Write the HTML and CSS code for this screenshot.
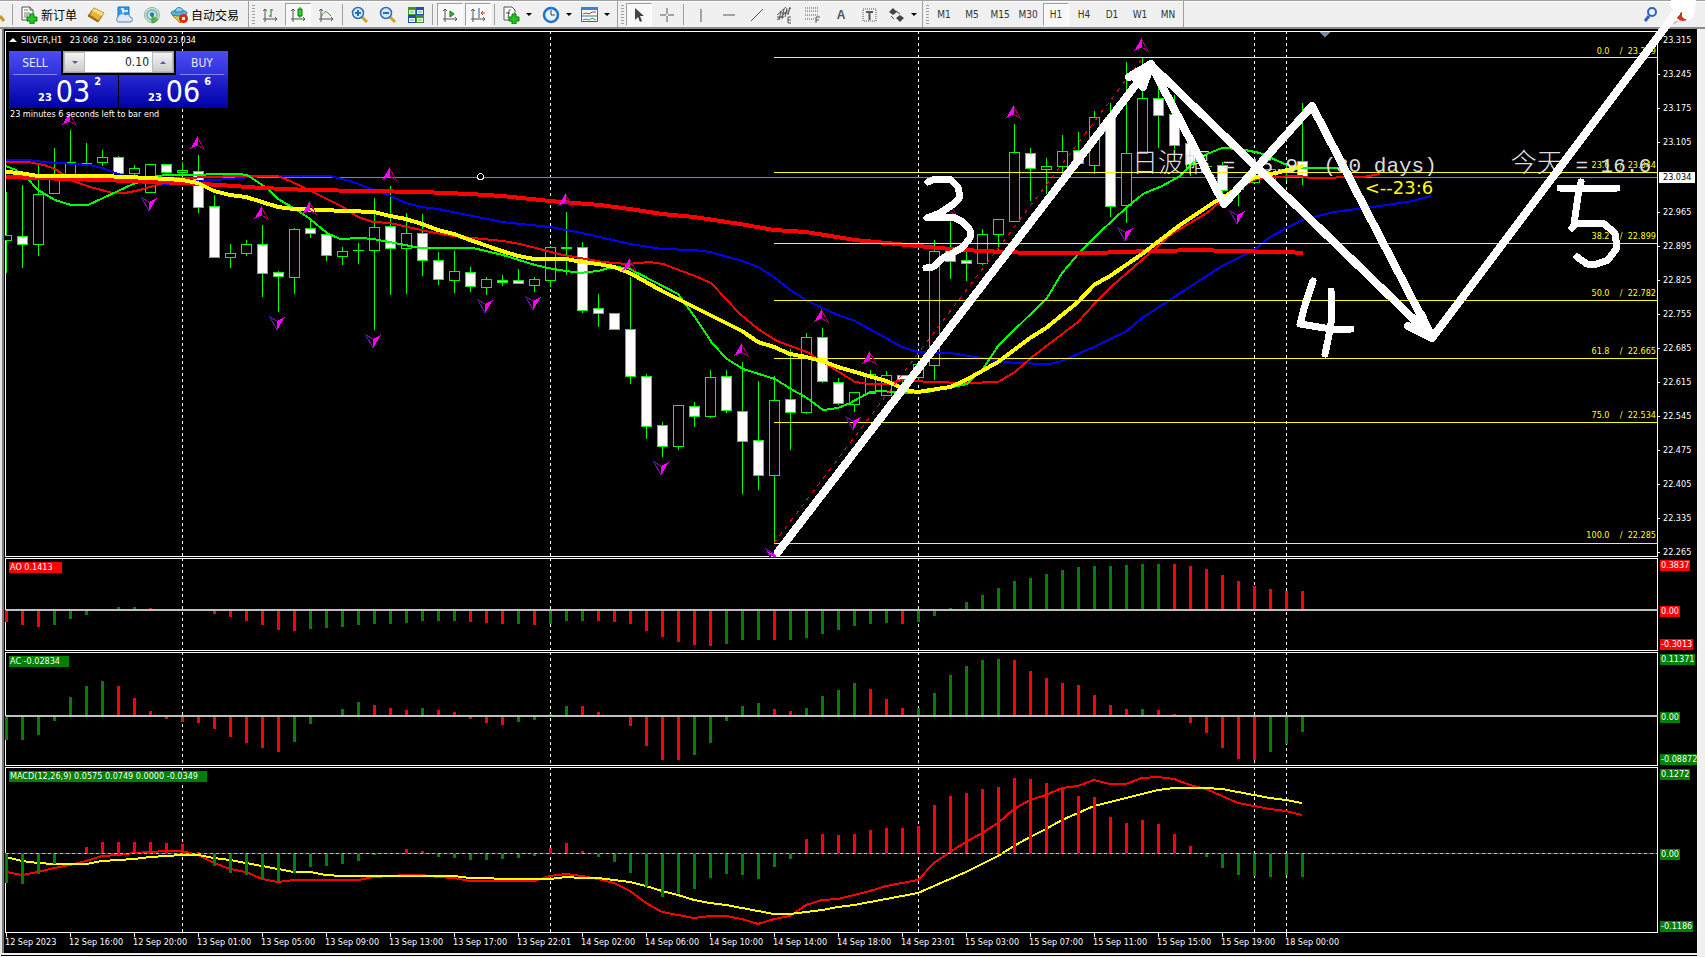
FILE: index.html
```html
<!DOCTYPE html>
<html lang="zh-CN">
<head>
<meta charset="utf-8">
<title>SILVER,H1</title>
<link rel="stylesheet" href="styles.css">
</head>
<body>
<header class="toolbar">
  <div class="group group-trade">
    <button class="tool tool-lens" aria-label="Data window"><svg width="5" height="18" viewBox="0 0 5 18"><path d="M0 10l4 5" stroke="#c8962c" stroke-width="3"/></svg></button>
    <span class="sep"></span>
    <button class="tool tool-text"><svg width="17" height="18" viewBox="0 0 17 18"><path d="M1 1h8l3 3v10H1z" fill="#fff" stroke="#555"/><path d="M9 1v3h3" fill="#ccc" stroke="#555"/><path d="M3 4h4M3 7h6M3 9h6M3 11h4" stroke="#777"/><path d="M9 8h4v3h3v4h-3v3H9v-3H6v-4h3z" fill="#1fc81f" stroke="#0a7a0a"/></svg><span>新订单</span></button>
    <button class="tool" aria-label="Market watch"><svg width="18" height="18" viewBox="0 0 18 18"><path d="M1 10L7 2l10 5-6 9z" fill="#e8b33c" stroke="#8a5a10"/><path d="M7 2l10 5-2 3-10-5z" fill="#f8dc7a"/><path d="M1 10l10 6v-2L2 8z" fill="#a06a16"/></svg></button>
    <button class="tool" aria-label="Cloud"><svg width="18" height="18" viewBox="0 0 18 18"><path d="M3 1h11v10H3z" fill="#2a9df0" stroke="#1473bf"/><path d="M6 3h2v7M8 5h5" stroke="#fff" stroke-width="1.5" fill="none"/><path d="M3 16a3 3 0 010-5 4 4 0 017-2 3 3 0 015 2 2.500 2.500 0 010 5z" fill="#dfe9f6" stroke="#5c80b4"/></svg></button>
    <button class="tool" aria-label="Signals"><svg width="18" height="18" viewBox="0 0 18 18"><circle cx="9" cy="9" r="7.500" fill="#d6e8e2" stroke="#8fb0a8"/><circle cx="9" cy="9" r="5" fill="none" stroke="#6fae94" stroke-width="1.500"/><path d="M9 9v8a8 8 0 006-4" fill="#59b64a" stroke="#3a9a34"/><circle cx="9" cy="8.500" r="2.200" fill="#247ab8"/></svg></button>
    <button class="tool tool-text tool-auto"><svg width="19" height="18" viewBox="0 0 19 18"><path d="M2 9l8 8 6-6V8z" fill="#f2c640" stroke="#b98512"/><ellipse cx="9" cy="7" rx="8" ry="3" fill="#5bb2de" stroke="#2c7fae"/><path d="M5 6c0-6 8-6 8 0z" fill="#8fd0ee" stroke="#2c7fae"/><circle cx="13.500" cy="12.500" r="4.500" fill="#d82a10"/><path d="M12 11h3v3h-3z" fill="#fff"/></svg><span>自动交易</span></button>
  </div>
  <div class="group group-chart">
    <span class="grip"></span>
    <button class="tool" aria-label="Bar chart"><svg class="line" width="16" height="16" viewBox="0 0 16 16"><path d="M3 2v13M1 12h14M1 4l2-2 2 2M13 10l2 2-2 2"/><path class="green-line" d="M9 2v8M9 9H7M9 3h2"/></svg></button>
    <button class="tool pressed" aria-label="Candlesticks"><svg class="line" width="16" height="16" viewBox="0 0 16 16"><path d="M3 2v13M1 12h14M1 4l2-2 2 2M13 10l2 2-2 2"/><path d="M10 0v11" class="green-line"/><path d="M8 2h4v7H8z" fill="#2fd02f" stroke="#0a7a0a"/></svg></button>
    <button class="tool" aria-label="Line chart"><svg class="line" width="16" height="16" viewBox="0 0 16 16"><path d="M3 2v13M1 12h14M1 4l2-2 2 2M13 10l2 2-2 2"/><path d="M3 10C6 4 8 4 10 6l3 3" stroke="#2a9a2a" fill="none"/></svg></button>
    <span class="sep"></span>
    <button class="tool" aria-label="Zoom in"><svg width="18" height="18" viewBox="0 0 18 18"><path d="M11 11l5 5" stroke="#d2a12c" stroke-width="3"/><circle cx="7" cy="7" r="5.500" fill="#d4ebfb" stroke="#2a6cb4" stroke-width="1.500"/><path d="M4 7h6M7 4v6" stroke="#2a6cb4" stroke-width="2"/></svg></button>
    <button class="tool" aria-label="Zoom out"><svg width="18" height="18" viewBox="0 0 18 18"><path d="M11 11l5 5" stroke="#d2a12c" stroke-width="3"/><circle cx="7" cy="7" r="5.500" fill="#d4ebfb" stroke="#2a6cb4" stroke-width="1.500"/><path d="M4 7h6" stroke="#2a6cb4" stroke-width="2"/></svg></button>
    <button class="tool" aria-label="Tile windows"><svg width="16" height="16" viewBox="0 0 16 16"><path d="M0 0h8v8H0zM8 8h8v8H8z" fill="#3a9a1c"/><path d="M8 0h8v8H8zM0 8h8v8H0z" fill="#1c50b8"/><path d="M1 3h6v4H1zM9 3h6v4H9zM1 11h6v4H1zM9 11h6v4H9z" fill="#e8f4e8"/><path d="M2 5h4M10 5h4M2 13h4M10 13h4" stroke="#7ab07a"/></svg></button>
    <span class="sep"></span>
    <button class="tool pressed" aria-label="Auto scroll"><svg class="line" width="16" height="16" viewBox="0 0 16 16"><path d="M3 2v13M1 12h14M1 4l2-2 2 2M13 10l2 2-2 2"/><path d="M8 4l4 3-4 3z" fill="#2fc02f" stroke="#0a7a0a"/></svg></button>
    <button class="tool pressed" aria-label="Chart shift"><svg class="line" width="16" height="16" viewBox="0 0 16 16"><path d="M3 2v13M1 12h14M1 4l2-2 2 2M13 10l2 2-2 2"/><path d="M9 1v10" stroke="#1c60a8"/><path d="M15 6h-4M13 4l-2 2 2 2" stroke="#c83c10"/></svg></button>
    <span class="sep"></span>
    <button class="tool tool-drop" aria-label="Indicators"><svg width="17" height="18" viewBox="0 0 17 18"><path d="M1 1h8l3 3v10H1z" fill="#fff" stroke="#555"/><path d="M8 4c-3-1-2 3-3 8M3 7h4" stroke="#444" fill="none"/><path d="M9 8h4v3h3v4h-3v3H9v-3H6v-4h3z" fill="#1fc81f" stroke="#0a7a0a"/></svg><i class="caret"></i></button>
    <button class="tool tool-drop" aria-label="Periods"><svg width="18" height="18" viewBox="0 0 18 18"><circle cx="9" cy="9" r="7" fill="#e8f2fc" stroke="#1c74d0" stroke-width="2.500"/><path d="M9 4v5h4" stroke="#444" fill="none"/></svg><i class="caret"></i></button>
    <button class="tool tool-drop" aria-label="Templates"><svg width="17" height="16" viewBox="0 0 17 16"><path d="M.5.5h16v14H.5z" fill="#fff" stroke="#2a6cb4"/><path d="M0 0h17v3H0z" fill="#3a84d8"/><path d="M2 7l3-1 3 1 3-2h4" stroke="#a83c1c" fill="none"/><path d="M1 9h15" stroke="#2a6cb4"/><path d="M2 13l3-1 3 1 3-2 4 2" stroke="#2a9a2a" fill="none"/></svg><i class="caret"></i></button>
  </div>
  <div class="group group-draw">
    <span class="grip"></span>
    <button class="tool pressed" aria-label="Cursor"><svg width="16" height="16" viewBox="0 0 16 16"><path d="M4 1v12l3-3 2 5 2-1-2-5h4z" fill="#444"/></svg></button>
    <button class="tool" aria-label="Crosshair"><svg class="line" width="16" height="16" viewBox="0 0 16 16"><path d="M8 1v6M8 9v6M1 8h6M9 8h6"/></svg></button>
    <span class="sep"></span>
    <button class="tool" aria-label="Vertical line"><svg class="line" width="16" height="16" viewBox="0 0 16 16"><path d="M8 2v13"/></svg></button>
    <button class="tool" aria-label="Horizontal line"><svg class="line" width="16" height="16" viewBox="0 0 16 16"><path d="M2 8h12"/></svg></button>
    <button class="tool" aria-label="Trendline"><svg class="line" width="16" height="16" viewBox="0 0 16 16"><path d="M2 14L14 2"/></svg></button>
    <button class="tool" aria-label="Channel"><svg class="line" width="18" height="18" viewBox="0 0 18 18"><path d="M1 9l9-8M1 14L15 2M5 5l-2 9M8 3L6 13M11 2L9 11M14 1l-2 8M1 11h7M5 7h8M15 11h-3v6h3M12 14h3"/></svg></button>
    <button class="tool" aria-label="Fibonacci"><svg class="line" width="18" height="18" viewBox="0 0 18 18"><path stroke-dasharray="1 1" d="M1 2h14M1 5h14M1 9h14M1 13h9"/><path d="M12 17v-6h4M12 14h3"/></svg></button>
    <button class="tool letter">A</button>
    <button class="tool" aria-label="Text label"><svg class="line" width="16" height="16" viewBox="0 0 16 16"><path stroke-dasharray="1 1" d="M2 2h13v12H2z"/><path stroke-width="2" d="M5 5h7M8.500 5v8"/></svg></button>
    <button class="tool tool-drop" aria-label="Arrows"><svg width="17" height="16" viewBox="0 0 17 16"><path d="M1 5l4-4 4 4-4 3zM8 11l4-3 4 3-4 4z" fill="#444"/><path d="M3 9l3 3M8 4l4 3" stroke="#444" fill="none"/></svg><i class="caret"></i></button>
  </div>
  <div class="group group-period">
    <span class="grip"></span>
    <button class="tool period">M1</button>
    <button class="tool period">M5</button>
    <button class="tool period">M15</button>
    <button class="tool period">M30</button>
    <button class="tool period pressed">H1</button>
    <button class="tool period">H4</button>
    <button class="tool period">D1</button>
    <button class="tool period">W1</button>
    <button class="tool period">MN</button>
  </div>
  <div class="group group-end">
    <button class="tool" aria-label="Search"><svg width="16" height="18" viewBox="0 0 16 18"><circle cx="10" cy="6" r="4" fill="#eaf2fc" stroke="#2a62c8" stroke-width="2"/><path d="M7 10l-4 5" stroke="#2a62c8" stroke-width="3"/></svg></button>
    <button class="tool" aria-label="Notifications"><svg width="20" height="20" viewBox="0 0 20 20"><circle cx="13" cy="9" r="7" fill="#d8301c"/><path d="M13 4v4M13 10v2" stroke="#fff" stroke-width="2"/><path d="M2 17l8-1-6 3z" fill="#bbb"/></svg></button>
  </div>
</header>

<main class="workspace">
  <div class="chart">
    <section class="pane price-pane">
      <svg class="plot" id="price" viewBox="5 31 1653 526" preserveAspectRatio="none"></svg>
      <div class="fib-labels" id="fibs"></div>
      <div class="chart-title"><i class="up"></i><span>SILVER,H1&nbsp;&nbsp; 23.068 &nbsp;23.186 &nbsp;23.020 23.034</span></div>
      <div class="trade">
        <button class="side sell">SELL</button>
        <div class="volume">
          <button class="step" aria-label="Decrease volume"><i class="step-down"></i></button>
          <input class="lots" type="text" value="0.10" aria-label="Volume">
          <button class="step" aria-label="Increase volume"><i class="step-up"></i></button>
        </div>
        <button class="side buy">BUY</button>
        <div class="quote bid"><small>23</small><b>03</b><sup>2</sup></div>
        <div class="quote ask"><small>23</small><b>06</b><sup>6</sup></div>
      </div>
      <div class="countdown">23 minutes 6 seconds left to bar end</div>
      <div class="note note-range"><span class="han">日波幅</span> = 15.9&nbsp; (30 days)</div>
      <div class="note note-today"><span class="han">今天</span> = 16.6</div>
      <div class="note-time">&lt;--23:6</div>
    </section>
    <div class="scale price-scale" id="scale"></div>

    <section class="pane">
      <svg class="plot" id="ao" viewBox="5 558 1653 93" preserveAspectRatio="none"></svg>
      <span class="tag red">AO 0.1413</span>
    </section>
    <div class="scale sub-scale red-scale scale-ao"><span>0.3837</span><span>0.00</span><span>-0.3013</span></div>

    <section class="pane">
      <svg class="plot" id="ac" viewBox="5 652 1653 114" preserveAspectRatio="none"></svg>
      <span class="tag green">AC -0.02834</span>
    </section>
    <div class="scale sub-scale scale-ac"><span>0.11371</span><span>0.00</span><span>-0.08872</span></div>

    <section class="pane">
      <svg class="plot" id="macd" viewBox="5 767 1653 166" preserveAspectRatio="none"></svg>
      <span class="tag green">MACD(12,26,9) 0.0575 0.0749 0.0000 -0.0349</span>
    </section>
    <div class="scale sub-scale scale-macd"><span>0.1272</span><span>0.00</span><span>-0.1186</span></div>

    <div class="times" id="times"></div>
  </div>
</main>
<footer class="tabs"><span class="tab"></span><span class="tab-rest"></span></footer>

<svg class="sketch" viewBox="0 0 1705 957" preserveAspectRatio="none" aria-hidden="true">
  <g fill="none" stroke="#fff" stroke-linecap="round" stroke-linejoin="round">
    <g stroke-width="8">
      <path d="M778 552L1151 65L1224 204L1312 106L1432 337L1151 65"/>
      <path d="M1432 338L1690 -6"/>
      <path d="M1129 77l22-13-8 23M1135 78l10-4M1408 326l24 12-11-24M1418 326l6 0"/>
      <path stroke-width="12" d="M1676 4l14-2-2 12"/>
    </g>
    <g stroke-width="7">
      <path d="M928 182L935 179H950L958 187L960 197L955 203L940 213L927 218L953 217L963 222L970 230V238L962 248L943 258L933 267L926 268"/>
      <path d="M1313 281L1305 305L1300 324L1331 329H1351M1331 291V323L1328 340L1325 354"/>
      <path d="M1560 188H1617M1581 182L1578 196L1574 224M1572 228L1576 223H1603L1615 233L1617 248L1608 260L1597 264H1587L1577 257"/>
    </g>
  </g>
</svg>
<script src="chart.js"></script>
</body>
</html>
```

FILE: styles.css
```css
* { box-sizing: border-box; }
html, body { height: 100%; }
body {
  margin: 0;
  display: flex;
  flex-direction: column;
  position: relative;
  overflow: hidden;
  background: #f0f0f0;
  font-family: "DejaVu Sans Condensed", "DejaVu Sans", "Noto Sans CJK SC", sans-serif;
  font-size: 9px;
}
button { font: inherit; padding: 0; border: 0; background: none; }

.toolbar {
  display: flex;
  flex: none;
  height: 29px;
  background: #f0f0f0;
  border-top: 1px solid #a0a0a0;
  border-bottom: 2px solid #8c8c8c;
  box-shadow: inset 0 1px #fff;
}
.group {
  display: flex;
  align-items: center;
  gap: 2px;
  border-right: 1px solid #a0a0a0;
  padding-top: 1px;
}
.group-trade { width: 249px; }
.group-chart { width: 369px; padding-left: 3px; }
.group-draw { width: 305px; padding-left: 3px; }
.group-period { width: 261px; padding-left: 3px; }
.group-end { border: 0; margin-left: auto; padding-right: 12px; gap: 4px; }
.grip {
  width: 3px;
  height: 20px;
  background: repeating-linear-gradient(#a0a0a0 0 1px, transparent 1px 3px);
}
.sep { width: 1px; height: 21px; margin: 0 2px 0 1px; background: #a0a0a0; }
.tool {
  display: flex;
  align-items: center;
  justify-content: center;
  flex: none;
  width: 26px;
  height: 23px;
  color: #333;
}
.pressed { background: #f8f8f8; border: 1px solid #fff; border-top-color: #a0a0a0; border-left-color: #a0a0a0; }
.tool-lens { width: 9px; justify-content: flex-start; }
.tool-text { width: auto; gap: 3px; padding: 0 4px; font: 12px "Noto Sans CJK SC", sans-serif; color: #000; }
.tool-auto { padding: 0 3px; gap: 2px; }
.tool-drop { width: 37px; gap: 6px; }
.letter { font: bold 12px "Liberation Sans", sans-serif; color: #555; }
.period { font-size: 10px; }
.caret { border: 3px solid transparent; border-top-color: #000; border-bottom: 0; }
.line { fill: none; stroke: #555; }
.green-line { stroke: #0a8a0a; }

.workspace {
  flex: 1;
  min-height: 0;
  display: flex;
  margin-right: 8px;
  border-left: 2px solid #e4e4e4;
}
.chart {
  flex: 1;
  min-width: 0;
  display: grid;
  grid-template-columns: minmax(0, 1fr) 39px;
  grid-template-rows: minmax(0, 526fr) minmax(0, 93fr) minmax(0, 114fr) minmax(0, 166fr) 19px;
  row-gap: 1px;
  padding: 2px 0 0 1px;
  background: #000;
  border-left: 2px solid #777;
  color: #fff;
}
.pane { position: relative; border: 1px solid #fff; }
.plot { position: absolute; top: -1px; left: -1px; width: calc(100% + 2px); height: calc(100% + 2px); shape-rendering: crispEdges; }

.chart-title { position: absolute; top: 2px; left: 3px; display: flex; align-items: center; gap: 4px; line-height: 12px; }
.up { border: 4px solid transparent; border-bottom-color: #fff; border-top: 0; }
.countdown { position: absolute; top: 76px; left: 4px; line-height: 12px; }

.trade {
  position: absolute;
  top: 19px;
  left: 3px;
  width: 219px;
  display: grid;
  grid-template-columns: 52px minmax(0, 1fr) 52px;
  grid-template-rows: 24px 33px;
  column-gap: 2px;
  background: #000;
}
.side {
  font-size: 12px;
  color: #e8e8ff;
  background: linear-gradient(#4c4cf4, #3030dc);
  position: relative;
}
.side::after { content: ""; position: absolute; left: 4px; right: 4px; bottom: 0; border-bottom: 1px solid #8080f0; }
.volume { display: flex; min-width: 0; height: 22px; border: 1px solid #a0a0a0; background: #fff; }
.step {
  flex: none;
  width: 21px;
  display: flex;
  align-items: center;
  justify-content: center;
  background: linear-gradient(#f4f4f4, #ccc);
  border: 1px solid #bbb;
}
.step-down { border: 3px solid transparent; border-top-color: #5060a0; border-bottom: 0; }
.step-up { border: 3px solid transparent; border-bottom-color: #5060a0; border-top: 0; }
.lots { flex: 1; width: 0; min-width: 0; border: 0; padding: 0 3px; text-align: right; font: 12px "DejaVu Sans Condensed", sans-serif; color: #222; }
.quote {
  display: flex;
  align-items: flex-end;
  grid-row: 2;
  width: 109px;
  padding: 0 0 4px 29px;
  gap: 4px;
  line-height: 12px;
  background: linear-gradient(#2828d4, #0000a8);
}
.bid { grid-column: 1 / 3; }
.ask { grid-column: 2 / 4; justify-self: end; }
.quote small, .quote sup { font-size: 11px; font-weight: bold; }
.quote b { font: 30px/24px "DejaVu Sans Condensed", sans-serif; }
.quote sup { align-self: flex-start; padding-top: 1px; }

.note { position: absolute; top: 115px; white-space: nowrap; font: 21px/28px "Liberation Mono", "Noto Sans CJK SC", monospace; color: #ddd; }
.note-range { left: 68.2%; }
.note-today { right: 6px; }
.han { font: 300 26px/28px "Noto Sans CJK SC", sans-serif; }
.note-time { position: absolute; top: 145px; left: 82.3%; font: 18px/22px "DejaVu Sans", sans-serif; color: #ff0; }

.fib-labels { position: absolute; inset: 0 1px 0 auto; width: 80px; color: #ff0; text-align: right; }
.fib { position: absolute; right: 0; line-height: 10px; margin-top: -12px; white-space: pre; }

.scale { position: relative; display: flex; flex-direction: column; white-space: nowrap; overflow: hidden; }
.price-scale { justify-content: space-between; padding-top: 5px; line-height: 9px; }
.price-scale span { padding-left: 5px; position: relative; }
.price-scale span::before { content: ""; position: absolute; left: 0; top: 4px; width: 2px; height: 1px; background: #fff; }
.price-scale .now { margin: 0 2px 0 1px; padding-left: 4px; line-height: 11px; background: #fff; color: #000; height: 11px; }
.sub-scale { display: grid; justify-items: start; line-height: 11px; padding: 2px 0 1px 2px; }
.sub-scale span { background: #008000; padding: 0 1px; height: 11px; }
.red-scale span { background: #f00; }
.scale-ao { grid-template-rows: 45fr 33fr 11px; }
.scale-ac { grid-template-rows: 57fr 42fr 11px; }
.scale-macd { grid-template-rows: 79fr 72fr 11px; }

.tag { position: absolute; top: 3px; left: 3px; line-height: 11px; padding: 0 9px 0 1px; }
.red { background: #f00; }
.green { background: #008000; }

.times { grid-column: 1 / 3; display: flex; margin-right: 39px; }
.times span { position: relative; flex: 0 0 3.872%; padding-top: 3px; line-height: 11px; white-space: nowrap; }
.times span::before { content: ""; position: absolute; left: 1px; top: -1px; height: 4px; border-left: 1px solid #fff; }

.tabs { flex: none; height: 4px; display: flex; padding: 2px 0 0 1px; gap: 8px; }
.tab { width: 85px; background: #fff; border-top: 1px solid #000; }
.tab-rest { flex: 1; margin-left: -8px; margin-right: 8px; border-top: 1px solid #000; }

.sketch { position: absolute; inset: 0; width: 100%; height: 100%; pointer-events: none; shape-rendering: crispEdges; }
```

FILE: chart.js
```js
const STEP = 16;
const X0 = 6;
const x = i => X0 + STEP * i;
const RIGHT = 1658;

// high, body top, body bottom, low, 1 = falling candle
const candles = [
  [192,235,240,273,0],[185,236,244,268,1],[165,194,244,256,0],[148,176,193,193,0],[130,162,175,175,0],[143,163,163,163,0],
  [150,157,162,166,0],[156,157,173,173,1],[165,168,173,177,0],[164,164,192,192,0],[164,164,172,172,1],[162,170,172,174,0],
  [155,171,207,213,1],[195,206,257,257,1],[244,253,257,268,0],[240,244,253,256,0],[225,244,273,297,1],[271,272,276,312,1],
  [228,229,277,294,0],[221,228,233,238,1],[233,234,255,261,1],[247,251,256,265,0],[243,250,250,264,0],[198,227,250,330,0],
  [186,226,248,295,1],[213,233,248,294,0],[214,233,260,276,1],[252,260,279,285,1],[251,271,280,293,0],[267,272,286,292,1],
  [277,279,287,295,0],[275,280,282,286,1],[269,280,283,283,1],[277,279,285,292,0],[246,247,280,287,0],[212,247,248,275,0],
  [242,247,310,313,1],[294,308,313,327,1],[313,313,329,329,1],[277,329,376,384,1],[374,376,426,439,1],[422,425,446,457,1],
  [405,405,446,450,0],[402,406,416,427,1],[370,377,416,418,0],[370,376,410,413,1],[362,411,441,494,1],[381,440,475,490,1],
  [376,400,475,543,0],[349,399,412,450,1],[333,337,412,414,0],[328,337,381,383,1],[378,382,403,405,1],[392,392,404,412,0],
  [370,374,393,393,0],[371,375,395,395,0],[375,375,379,390,1],[364,364,377,380,0],[240,251,365,380,0],[218,250,261,279,1],
  [252,260,263,281,1],[229,234,263,265,0],[219,219,234,250,0],[124,152,221,221,0],[148,153,168,201,1],[158,166,169,194,0],
  [135,151,166,186,0],[132,150,163,163,1],[111,117,165,174,0],[103,117,206,217,1],[62,153,205,223,0],[58,98,153,153,0],
  [73,98,115,148,1],[95,114,145,149,1],[143,143,164,176,1],[166,166,166,166,0],[162,165,190,193,1],[186,187,189,206,0],
  [170,178,182,182,0],[169,169,180,180,0],[166,169,172,181,0],[103,161,176,185,1]
];

const fibs = [
  [57,'0.0','23.279'],[172,'23.6','23.044'],[243,'38.2','22.899'],[300,'50.0','22.782'],
  [358,'61.8','22.665'],[422,'75.0','22.534'],[543,'100.0','22.285']
];

const averages = [
  ['#00f', 2, '6,160 28,160 44,162 90,165 102,168 118,174 134,180 150,183 165,184 182,184 198,181 230,179 262,176 330,176 350,181 374,190 390,196 406,203 422,207 438,209 502,222 550,227 582,233 630,244 662,249 694,250 710,252 742,261 758,267 774,277 790,290 806,300 822,308 838,315 855,321 902,347 918,352 950,353 982,358 1014,363 1050,364 1062,361 1078,354 1094,347 1127,331 1142,318 1222,266 1254,250 1270,237 1302,220 1334,212 1380,206 1413,201 1431,196'],
  ['#f00', 2, '6,162 28,162 44,165 55,169 61,173 73,181 90,187 113,193 125,193 140,190 160,184 182,178 213,177 233,176 278,176 290,181 313,192 343,207 358,217 373,222 390,223 430,232 453,236 503,241 520,244 563,255 603,262 627,264 650,262 663,264 695,276 711,283 740,314 758,329 777,341 807,352 855,382 870,384 887,384 902,380 930,382 967,383 998,382 1015,372 1032,357 1078,322 1095,303 1112,286 1127,273 1173,233 1207,213 1220,202 1253,180 1270,177 1300,176 1310,178 1363,177 1380,174'],
  ['#0f0', 2, '6,166 16,170 27,178 38,190 55,200 71,205 88,205 103,198 133,184 157,176 167,175 200,175 213,174 238,174 247,175 267,188 278,199 297,210 310,219 327,233 340,239 360,238 373,239 400,244 420,248 473,248 503,255 535,265 553,269 580,273 598,271 613,267 628,268 678,294 697,320 712,343 727,359 743,369 775,379 791,389 807,398 823,410 838,408 850,403 870,392 882,391 900,393 927,392 967,384 983,369 998,346 1047,298 1062,273 1080,252 1100,232 1127,207 1143,194 1162,186 1180,176 1193,163 1207,154 1222,148 1240,149 1260,153 1287,165 1303,168 1343,168'],
  ['#f00', 4, '6,177 102,180 182,183 220,185 262,188 310,190 422,192 470,194 502,196 550,201 600,205 630,209 662,214 694,217 740,224 774,230 806,232 855,240 918,246 950,249 982,251 1030,253 1094,253 1150,251 1206,250 1222,251 1286,252 1303,253'],
  ['#ff0', 4, '6,172 20,173 38,176 102,176 150,178 182,180 198,183 214,191 230,195 246,197 262,202 278,207 294,209 374,212 390,216 406,219 422,224 438,230 454,234 470,240 502,251 518,256 534,259 566,259 582,262 598,264 614,267 630,273 662,291 694,307 710,315 726,323 742,331 758,342 774,347 790,354 806,357 822,361 838,367 886,381 902,388 910,391 918,392 950,387 966,380 998,362 1030,338 1046,328 1078,302 1094,285 1110,276 1142,254 1180,225 1213,203 1227,195 1253,178 1280,172 1303,166']
];

const fractalsUp = [[69,112],[197,136],[261,206],[309,201],[389,167],[565,193],[629,258],[741,343],[821,309],[869,351],[949,202],[1013,105],[1141,38]];
const fractalsDown = [[149,211],[277,330],[373,348],[485,313],[533,310],[661,475],[773,562],[853,430],[1125,241],[1237,224]];
const days = [182, 550, 918, 1254, 1286];

const SVG = 'http://www.w3.org/2000/svg';
function add(svg, name, attrs) {
  const el = document.createElementNS(SVG, name);
  for (const k in attrs) el.setAttribute(k, attrs[k]);
  svg.appendChild(el);
}
function rect(svg, rx, ry, width, height, fill) {
  add(svg, 'rect', { x: rx, y: ry, width, height, fill });
}
function separators(svg, top, bottom) {
  for (const d of days) {
    add(svg, 'path', { d: `M${d + 0.5} ${top}V${bottom}`, stroke: '#fff', 'stroke-dasharray': '3 3' });
  }
}

const price = document.getElementById('price');
separators(price, 31, 557);
rect(price, 6, 177, RIGHT - 7, 1, '#778899');
candles.forEach(([high, top, bottom, low, down], i) => {
  const c = x(i);
  rect(price, c, high, 1, Math.max(low - high, 1), '#0f0');
  rect(price, c - 5, top, 11, bottom - top + 1, '#0f0');
  if (bottom - top > 1) {
    rect(price, c - 4, top + 1, 9, bottom - top - 1, down ? '#fff' : '#000');
  }
});
for (const [color, width, points] of averages) {
  add(price, 'polyline', { points, fill: 'none', stroke: color, 'stroke-width': width, 'stroke-linejoin': 'round' });
}
const box = document.getElementById('fibs');
for (const [y, level, value] of fibs) {
  rect(price, 774, y, RIGHT - 774, 1, '#ff0');
  const label = document.createElement('span');
  label.className = 'fib';
  label.style.top = (y - 31) / 526 * 100 + '%';
  label.textContent = `${level}    /  ${value}`;
  box.appendChild(label);
}
add(price, 'path', { d: 'M774 543L1142 59', stroke: '#f00', 'stroke-dasharray': '4 5' });
for (const [fx, fy] of fractalsUp) {
  add(price, 'path', { d: `M${fx} ${fy}l7 13-7-4z`, fill: 'none', stroke: '#a00060' });
  add(price, 'path', { d: `M${fx + 1} ${fy}l-8 13 8-4z`, fill: '#f0f' });
}
for (const [fx, fy] of fractalsDown) {
  add(price, 'path', { d: `M${fx} ${fy}l-7-13 7 4z`, fill: 'none', stroke: '#7010b0' });
  add(price, 'path', { d: `M${fx} ${fy}l8-13-8 4z`, fill: '#f0f' });
}
add(price, 'path', { d: 'M772 557l-7-7 8 4z', fill: '#f0f' });
add(price, 'path', { d: 'M1319 32h11l-5 6z', fill: '#778899' });
add(price, 'circle', { cx: 480.5, cy: 176.5, r: 3, fill: '#000', stroke: '#fff' });

// Bar tips and line points of the lower panes are kept in thirds of a pixel below SUB_TOP.
const SUB_TOP = 550;
const sub = v => SUB_TOP + v / 3;

const ao = '215r 224r 230r 224g 206g 194g - 171g 171g 174r - - - 191r 200r 212r 224r 239r 242r 236g 233g 230g 224g 221g 221g 218g 212g 212g 212g 215r 218r 221r 221g 224r 221g 212g 212g 212r 215r 221r 242r 260r 275r 284r 287r 281g 271g 269g 271r 269g 263g 251g 239g 227g 221g 218g 221r 215g 197g 174g 156g 135g 114g 93g 84g 72g 60g 51g 48g 48g 45g 42g 42g 42r 48r 57r 75r 93r 108r 117r 123r 123r';
const ac = '569g 569g 554g 512g 441g 408g 393g 408r 444r 483r 506r 515r 518r 536r 560r 578r 593r 605r 575g 521g - 477g 456g 465r 474r 480r 474g 480r 486r 506r 518r 524r 515g 509g 492g 468g 468r 486r 502r 527r 587r 629r 629r 614g 578g 512g 468g 459g 477r 483r 474g 438g 420g 399g 417r 447r 474r 474g 429g 375g 348g 330g 327g 330r 363r 384r 399r 405r 435r 465r 477r 477g 480r 492r 518r 548r 593r 626r 629r 605g 581g 545g';
const macd = '998g 1001g 971g 941g - 891r 876r 876r 876r 876r 879r 882r 906r 947g 968g 974g 989g 995g 968g 950g 947g 941g 932g 914g - 897r 903r 920g 923g 929g 929g 926g 923g 917g 894r 879r 903r 920g 935g 968g 1010g 1040g 1028g 1016g 983g 971g 974g 986g 950g 926g 867r 852r 855r 852r 840r 834r 834r 828r 765r 738r 729r 717r 711r 684r 687r 699r 714r 738r 741r 801r 819r 810r 822r 852r 888r 920g 953g 974g 977g 980g 974g 980g';
const macdLine = [965,975,966,954,944,932,919,915,909,906,903,903,914,938,958,967,986,996,990,990,990,990,990,980,977,974,974,980,985,992,992,992,992,992,979,971,977,988,1000,1024,1058,1087,1096,1104,1098,1098,1107,1122,1107,1099,1066,1051,1048,1036,1023,1008,1000,989,940,906,877,848,819,778,751,734,715,707,689,702,702,685,680,688,705,718,738,758,769,778,784,795];
const signalLine = [920,932,938,942,942,941,934,931,928,922,918,915,915,923,929,938,947,957,965,967,974,978,978,978,978,978,978,978,979,983,984,986,986,986,986,982,983,985,989,995,1007,1023,1036,1050,1059,1066,1075,1084,1091,1092,1087,1081,1072,1066,1057,1048,1039,1028,1009,988,967,942,918,888,862,838,811,790,769,757,745,733,721,715,714,715,718,727,736,745,751,760];

function bars(svg, data, zero) {
  data.split(' ').forEach((item, i) => {
    if (item === '-') return;
    const y = Math.round(sub(parseInt(item, 10)));
    rect(svg, x(i) - 1, Math.min(y, zero), 3, Math.abs(y - zero), item.endsWith('r') ? '#f00' : '#008000');
  });
}
function line(svg, values, color) {
  const points = values.map((v, i) => `${x(i)},${Math.round(sub(v))}`).join(' ');
  add(svg, 'polyline', { points, fill: 'none', stroke: color, 'stroke-width': 2 });
}

const aoSvg = document.getElementById('ao');
separators(aoSvg, 558, 651);
bars(aoSvg, ao, 610);
rect(aoSvg, 6, 609, RIGHT - 6, 2, '#c0c0c0');

const acSvg = document.getElementById('ac');
separators(acSvg, 652, 766);
bars(acSvg, ac, 716);
rect(acSvg, 6, 715, RIGHT - 6, 2, '#c0c0c0');

const macdSvg = document.getElementById('macd');
separators(macdSvg, 767, 933);
line(macdSvg, macdLine, '#f00');
line(macdSvg, signalLine, '#ff0');
bars(macdSvg, macd, 853);
rect(macdSvg, 6, 853, RIGHT - 6, 1, '#008000');
add(macdSvg, 'path', { d: `M6 853.5H${RIGHT}`, stroke: '#c0c0c0', 'stroke-dasharray': '3 3' });

const scale = document.getElementById('scale');
for (let i = 0; i < 16; i++) {
  const span = document.createElement('span');
  span.textContent = i === 4 ? '23.034' : (23.315 - 0.07 * i).toFixed(3);
  if (i === 4) span.className = 'now';
  scale.appendChild(span);
}

const times = ['12 Sep 2023','12 Sep 16:00','12 Sep 20:00','13 Sep 01:00','13 Sep 05:00','13 Sep 09:00','13 Sep 13:00','13 Sep 17:00','13 Sep 22:01','14 Sep 02:00','14 Sep 06:00','14 Sep 10:00','14 Sep 14:00','14 Sep 18:00','14 Sep 23:01','15 Sep 03:00','15 Sep 07:00','15 Sep 11:00','15 Sep 15:00','15 Sep 19:00','18 Sep 00:00'];
for (const t of times) {
  const span = document.createElement('span');
  span.textContent = t;
  document.getElementById('times').appendChild(span);
}
```
